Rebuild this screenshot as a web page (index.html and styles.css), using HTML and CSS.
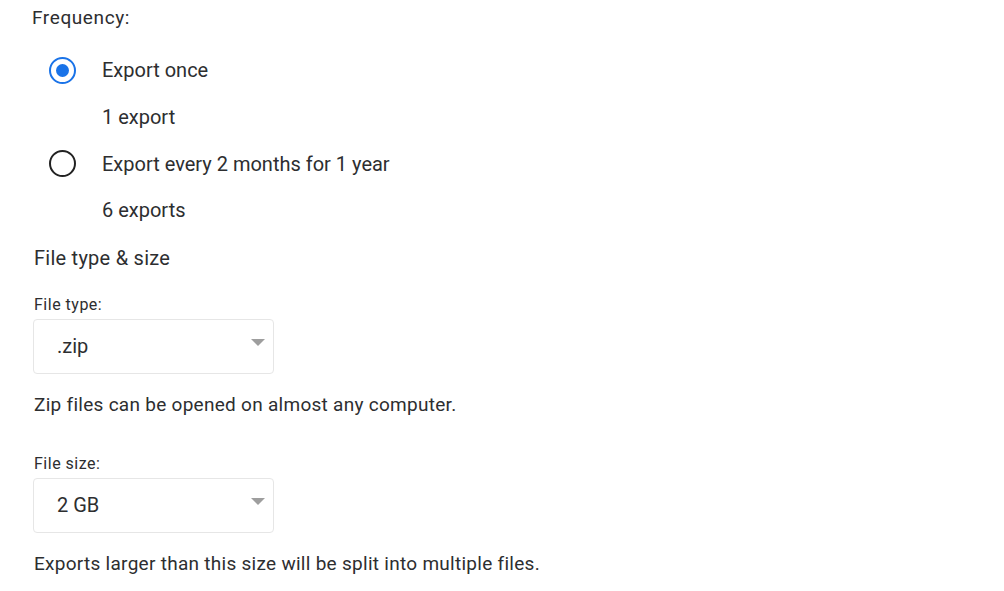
FILE: index.html
```html
<!DOCTYPE html>
<html lang="en">
<head>
    <meta charset="UTF-8">
    <meta name="viewport" content="width=device-width, initial-scale=1.0">
    <title>Export settings</title>
    <link rel="stylesheet" href="styles.css">
</head>
<body>
    <div class="panel">
        <div class="freq-label">Frequency:</div>

        <div class="options">
            <label class="option">
                <span class="radio checked"></span>
                <span>Export once</span>
            </label>
            <div class="option-note">1 export</div>
            <label class="option">
                <span class="radio"></span>
                <span>Export every 2 months for 1 year</span>
            </label>
            <div class="option-note">6 exports</div>
        </div>

        <h2 class="section-title">File type &amp; size</h2>

        <div class="field">
            <div class="field-label">File type:</div>
            <div class="select">
                <span class="select-value">.zip</span>
                <span class="caret"></span>
            </div>
        </div>
        <p class="hint">Zip files can be opened on almost any computer.</p>

        <div class="field">
            <div class="field-label">File size:</div>
            <div class="select">
                <span class="select-value">2 GB</span>
                <span class="caret"></span>
            </div>
        </div>
        <p class="hint">Exports larger than this size will be split into multiple files.</p>
    </div>
</body>
</html>
```

FILE: styles.css
```css
:root {
    --text: #2d2e30;
    --blue: #1a73e8;
    --border: #e6e6e6;
    --caret: #9e9e9e;
}

* {
    margin: 0;
    padding: 0;
    box-sizing: border-box;
}

body {
    font-family: Roboto, 'Noto Sans', sans-serif;
    background: #ffffff;
    color: var(--text);
}

.panel {
    padding-left: 32px;
    width: 640px;
}

.freq-label {
    height: 36px;
    line-height: 36px;
    font-size: 19px;
    letter-spacing: 0.6px;
}

.options {
    margin-top: 11px;
    margin-bottom: 1px;
}

.option,
.option-note {
    display: flex;
    align-items: center;
    height: 46.67px;
    font-size: 20px;
}

.option {
    gap: 26px;
    padding-left: 17px;
}

.option-note {
    padding-left: 70px;
}

.radio {
    width: 27px;
    height: 27px;
    border: 2px solid #222;
    border-radius: 50%;
    display: flex;
    align-items: center;
    justify-content: center;
}

.radio.checked {
    border: 2.5px solid var(--blue);
}

.radio.checked::after {
    content: "";
    width: 13px;
    height: 13px;
    border-radius: 50%;
    background: var(--blue);
}

.section-title {
    height: 46px;
    line-height: 46px;
    font-size: 20px;
    font-weight: normal;
    letter-spacing: 0.25px;
    padding-left: 2px;
}

.field {
    padding-top: 12px;
}

.field-label {
    height: 24px;
    line-height: 24px;
    font-size: 16px;
    letter-spacing: 0.5px;
    padding-left: 2px;
    margin-bottom: 2px;
}

.select {
    width: 241px;
    height: 55px;
    margin-left: 1px;
    border: 1px solid var(--border);
    border-radius: 4px;
    display: flex;
    align-items: center;
    justify-content: space-between;
    padding: 0 8px 0 23px;
}

.select-value {
    font-size: 20px;
}

.caret {
    width: 0;
    height: 0;
    border-left: 7px solid transparent;
    border-right: 7px solid transparent;
    border-top: 7px solid var(--caret);
    margin-top: -8px;
}

.hint {
    height: 30px;
    line-height: 30px;
    font-size: 19px;
    letter-spacing: 0.28px;
    margin-top: 16px;
    margin-bottom: 20px;
    padding-left: 2px;
}
```
